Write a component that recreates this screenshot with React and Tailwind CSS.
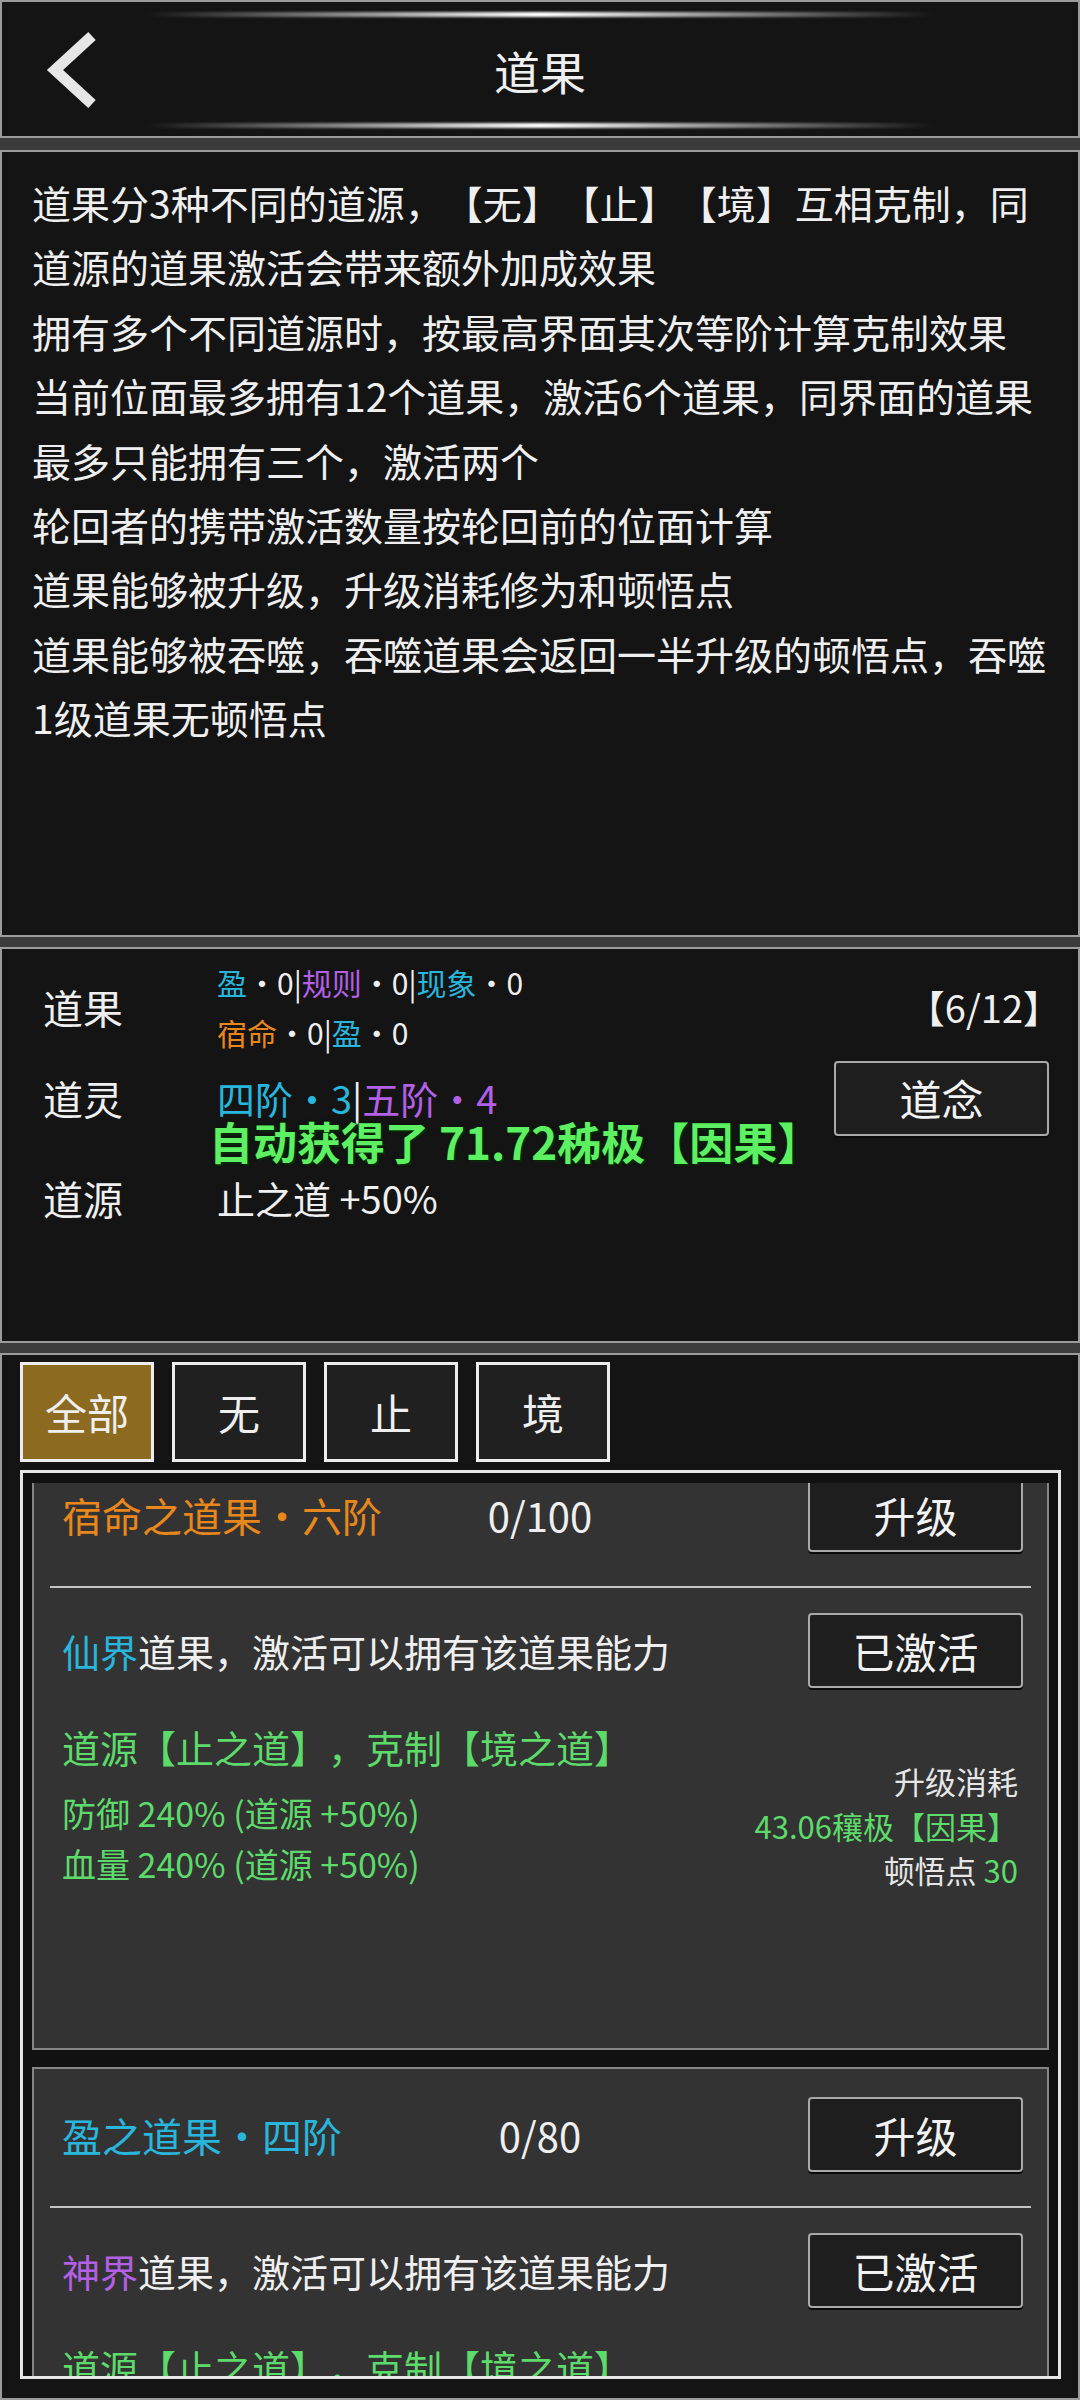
import React from 'react';

const intro = [
  '道果分3种不同的道源，【无】【止】【境】互相克制，同',
  '道源的道果激活会带来额外加成效果',
  '拥有多个不同道源时，按最高界面其次等阶计算克制效果',
  '当前位面最多拥有12个道果，激活6个道果，同界面的道果',
  '最多只能拥有三个，激活两个',
  '轮回者的携带激活数量按轮回前的位面计算',
  '道果能够被升级，升级消耗修为和顿悟点',
  '道果能够被吞噬，吞噬道果会返回一半升级的顿悟点，吞噬',
  '1级道果无顿悟点',
];

const tabs = ['全部', '无', '止', '境'];

function Panel({ className = '', children }) {
  return <div className={`border-2 border-[#9c9c9c] bg-[#141414] ${className}`}>{children}</div>;
}

function GameButton({ children }) {
  return (
    <button className="flex h-[75px] w-[215px] shrink-0 items-center justify-center rounded-[4px] border-2 border-[#a9a9a9] bg-[#1e1e1e] text-[42px] leading-none text-[#f2f2f2] shadow-[0_2px_0_#0a0a0a]">
      {children}
    </button>
  );
}

function Glow({ className = '' }) {
  return (
    <div className={`mx-auto h-[5px] w-[790px] rounded-full bg-linear-to-r from-transparent via-white to-transparent blur-[1px] ${className}`} />
  );
}

function FruitCard({ title, titleColor, count, realm, realmColor, children }) {
  return (
    <div className="h-[603px] shrink-0 border-2 border-[#858585] bg-[#333333]">
      <div className="mt-[28px] flex h-[75px] items-center pl-[28px] pr-[24px]">
        <div className={`w-[398px] text-[40px] leading-none ${titleColor}`}>{title}</div>
        <div className="w-[160px] text-center text-[40px] leading-none">{count}</div>
        <div className="flex-1" />
        <GameButton>升级</GameButton>
      </div>
      <div className="mx-[16px] mt-[34px] h-[2px] bg-[#c4c4c4]" />
      <div className="mt-[25px] flex h-[75px] items-center pl-[28px] pr-[24px]">
        <div className="flex-1 text-[38px] leading-none">
          <span className={realmColor}>{realm}</span>道果，激活可以拥有该道果能力
        </div>
        <GameButton>已激活</GameButton>
      </div>
      {children}
    </div>
  );
}

export default function App() {
  return (
    <div className="flex h-[2400px] w-[1080px] flex-col overflow-hidden bg-[#3c3c3c] font-['Noto_Sans_CJK_SC','Noto_Sans',sans-serif] text-[#efefef] [text-spacing-trim:space-all]">
      {/* top bar */}
      <Panel className="flex h-[138px] shrink-0 flex-col">
        <Glow className="mt-[10px]" />
        <div className="grid flex-1 grid-cols-[1fr_auto_1fr] items-center">
          <div className="pl-[44px]">
            <svg width="52" height="80" viewBox="0 0 52 80">
              <polyline points="46,6 9,40 46,74" fill="none" stroke="#e6e6e6" strokeWidth="11" strokeLinejoin="miter" />
            </svg>
          </div>
          <div className="text-[46px] leading-none">道果</div>
          <div />
        </div>
        <Glow className="mb-[8px]" />
      </Panel>

      {/* rules */}
      <Panel className="mt-[12px] h-[787px] shrink-0 pl-[30px] pt-[18px]">
        {intro.map((line) => (
          <div key={line} className="whitespace-nowrap text-[39px] leading-[64.4px]">
            {line}
          </div>
        ))}
      </Panel>

      {/* summary */}
      <Panel className="relative mt-[10px] h-[396px] shrink-0 pl-[41px] pr-[30px] pt-[8px]">
        <div className="flex h-[100px] items-center">
          <div className="w-[174px] text-[40px] leading-none">道果</div>
          <div className="flex-1 text-[30px] leading-[50px]">
            <div>
              <span className="text-[#28b6dc]">盈</span>・0|<span className="text-[#b35fe6]">规则</span>・0|
              <span className="text-[#28b6dc]">现象</span>・0
            </div>
            <div>
              <span className="text-[#e8871c]">宿命</span>・0|<span className="text-[#28b6dc]">盈</span>・0
            </div>
          </div>
          <div className="-mr-[13px] text-[38px] leading-none">【6/12】</div>
        </div>
        <div className="mt-[1px] flex h-[80px] items-center">
          <div className="w-[174px] text-[40px] leading-none">道灵</div>
          <div className="flex-1 text-[38px] leading-none">
            <span className="text-[#28b6dc]">四阶・3</span>|<span className="text-[#b35fe6]">五阶・4</span>
          </div>
          <div className="-mr-px">
            <GameButton>道念</GameButton>
          </div>
        </div>
        <div className="mt-[20px] flex h-[80px] items-center">
          <div className="w-[174px] text-[40px] leading-none">道源</div>
          <div className="text-[38px] leading-none">止之道 +50%</div>
        </div>
        <div className="absolute left-[207px] top-[170px] whitespace-nowrap text-[44px] font-bold leading-none text-[#5cf062] [text-shadow:0_0_2px_#062006,0_0_3px_#062006,2px_2px_0_#0b2d0b]">
          自动获得了 71.72秭极【因果】
        </div>
      </Panel>

      {/* list */}
      <Panel className="mt-[10px] flex-1">
        <div className="ml-[18px] mt-[7px] flex gap-[18px]">
          {tabs.map((t, i) => (
            <div
              key={t}
              className={`flex h-[100px] w-[134px] items-center justify-center border-[3px] border-[#ededed] text-[42px] leading-none ${
                i === 0 ? 'bg-[#8c6b20]' : 'bg-[#202020]'
              }`}
            >
              {t}
            </div>
          ))}
        </div>
        <div className="ml-[18px] mt-[8px] h-[909px] w-[1041px] border-[3px] border-[#e6e6e6] bg-[#111111] px-[9px] pt-[10px]">
          <div className="h-full overflow-hidden">
            <div className="-mt-[36px] flex flex-col gap-[17px]">
              <FruitCard
                title="宿命之道果・六阶"
                titleColor="text-[#e8871c]"
                count="0/100"
                realm="仙界"
                realmColor="text-[#28b6dc]"
              >
                <div className="mt-[34px] flex justify-between pl-[28px] pr-[29px]">
                  <div className="text-[#5ddb6a]">
                    <div className="text-[38px] leading-[50px]">道源【止之道】，克制【境之道】</div>
                    <div className="mt-[15px] text-[34px] leading-[51px]">防御 240% (道源 +50%)</div>
                    <div className="text-[34px] leading-[51px]">血量 240% (道源 +50%)</div>
                  </div>
                  <div className="pt-[37px] text-right text-[31px] leading-[44.5px]">
                    <div className="text-[#e6e6e6]">升级消耗</div>
                    <div className="text-[#5ddb6a]">43.06穰极【因果】</div>
                    <div className="text-[#e6e6e6]">
                      顿悟点 <span className="text-[#5ddb6a]">30</span>
                    </div>
                  </div>
                </div>
              </FruitCard>
              <FruitCard
                title="盈之道果・四阶"
                titleColor="text-[#28b6dc]"
                count="0/80"
                realm="神界"
                realmColor="text-[#b35fe6]"
              >
                <div className="mt-[34px] pl-[28px] text-[38px] leading-[50px] text-[#5ddb6a]">
                  道源【止之道】，克制【境之道】
                </div>
              </FruitCard>
            </div>
          </div>
        </div>
      </Panel>
    </div>
  );
}
